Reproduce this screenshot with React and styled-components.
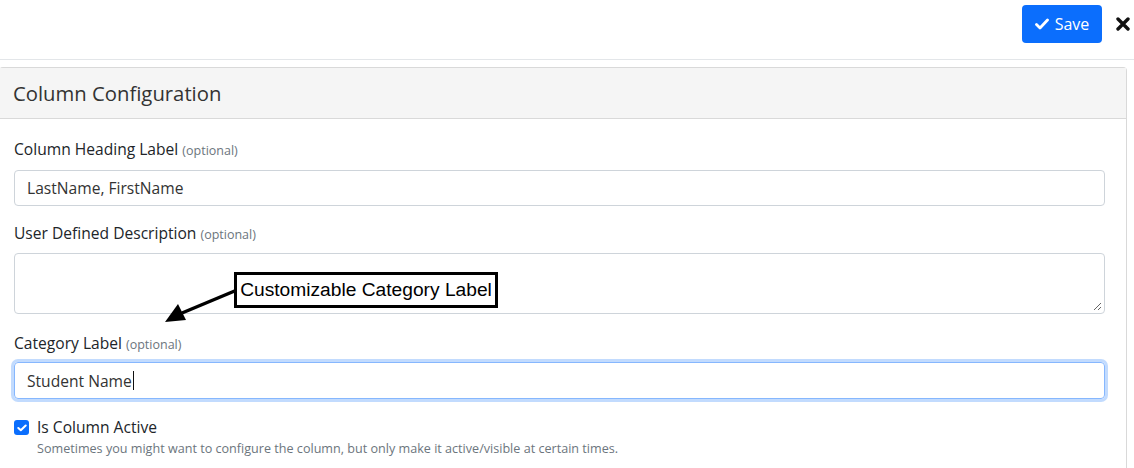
import { createGlobalStyle, styled } from "styled-components";

const GlobalStyle = createGlobalStyle`
    body{
        margin: 0;
        background: #fff;
        font-family: 'Open Sans', 'Liberation Sans', sans-serif;
        color: #212529;
        overflow: hidden;
    }
`

const Page = styled.div`
    position: relative;
    width: 1134px;
    height: 468px;
`

const TopBar = styled.div`
    height: 60px;
    border-bottom: 1px solid #e3e6e9;
    display: flex;
    align-items: center;
    justify-content: flex-end;
    padding-right: 4px;
    gap: 14px;
    box-sizing: border-box;
`

const SaveButton = styled.button`
    width: 80px;
    height: 38px;
    margin-top: -12px;
    background: #0b6efd;
    border: none;
    border-radius: 4px;
    color: #fff;
    font-family: 'Open Sans', sans-serif;
    font-size: 16px;
    display: flex;
    align-items: center;
    justify-content: center;
    gap: 6px;
    cursor: pointer;
    padding: 0;
`

const CloseButton = styled.span`
    margin-top: -12px;
    display: flex;
    align-items: center;
`

const Panel = styled.div`
    margin: 7px 0 0 -1px;
    width: 1128px;
    border: 1px solid #d9d9d9;
    border-radius: 4px 4px 0 0;
    border-bottom: none;
    height: 420px;
    box-sizing: border-box;
`

const PanelHeader = styled.div`
    height: 50px;
    background: #f5f5f5;
    border-bottom: 1px solid #d9d9d9;
    display: flex;
    align-items: center;
    padding-left: 13px;
    font-size: 20.3px;
    color: #333;
`

const PanelBody = styled.div`
    position: relative;
    padding: 19px 21px 0 14px;
`

const Field = styled.div`
    margin-bottom: ${p => p.space ?? 16}px;
`

const Label = styled.label`
    display: block;
    font-size: 15.6px;
    line-height: 22px;
    margin-bottom: ${p => p.gap || 8}px;
    color: #212529;
    small{
        font-size: 12.5px;
        color: #6c757d;
    }
`

const Input = styled.div`
    height: ${p => p.focus ? 37 : 36}px;
    box-sizing: border-box;
    border: 1px solid ${p => p.focus ? "#86b7fe" : "#ced4da"};
    border-radius: 4px;
    padding: 0 12px;
    display: flex;
    align-items: center;
    font-size: 15.6px;
    color: #333;
    box-shadow: ${p => p.focus ? "0 0 0 3px rgba(13,110,253,.25)" : "none"};
`

const Caret = styled.span`
    display: inline-block;
    width: 1px;
    height: 19px;
    background: #111;
    margin-left: 1px;
`

const TextArea = styled.div`
    position: relative;
    height: 61px;
    box-sizing: border-box;
    border: 1px solid #ced4da;
    border-radius: 4px;
`

const Grip = styled.svg`
    position: absolute;
    right: 2px;
    bottom: 2px;
`

const CheckRow = styled.div`
    display: flex;
    gap: 8px;
    margin-top: 17px;
`

const CheckBox = styled.span`
    width: 15px;
    height: 15px;
    margin-top: 4px;
    border-radius: 3px;
    background: #0b6efd;
    display: flex;
    align-items: center;
    justify-content: center;
    flex-shrink: 0;
`

const CheckText = styled.div`
    font-size: 15.6px;
    line-height: 22px;
    color: #212529;
    p{
        margin: 2px 0 0;
        font-size: 12.6px;
        line-height: 18px;
        color: #6c757d;
    }
`

const Callout = styled.div`
    position: absolute;
    left: 234px;
    top: 272px;
    width: 264px;
    height: 36px;
    box-sizing: border-box;
    border: 3px solid #000;
    background: #fff;
    font-family: 'Liberation Sans', Arial, sans-serif;
    font-size: 19.2px;
    display: flex;
    align-items: center;
    justify-content: center;
    color: #000;
`

const Arrow = styled.svg`
    position: absolute;
    left: 160px;
    top: 280px;
`

export default function App(){
    return (
        <Page>
            <GlobalStyle/>
            <TopBar>
                <SaveButton>
                    <svg width="14" height="12" viewBox="0 0 14 12">
                        <path d="M1.5 6.5 L5 10 L12.5 2" stroke="#fff" strokeWidth="2.8" fill="none" strokeLinecap="round" strokeLinejoin="round"/>
                    </svg>
                    Save
                </SaveButton>
                <CloseButton>
                    <svg width="14" height="14" viewBox="0 0 14 14">
                        <path d="M2 2 L12 12 M12 2 L2 12" stroke="#111" strokeWidth="3.4" strokeLinecap="round"/>
                    </svg>
                </CloseButton>
            </TopBar>
            <Panel>
                <PanelHeader>Column Configuration</PanelHeader>
                <PanelBody>
                    <Field>
                        <Label>Column Heading Label <small>(optional)</small></Label>
                        <Input>LastName, FirstName</Input>
                    </Field>
                    <Field space={18}>
                        <Label gap={7}>User Defined Description <small>(optional)</small></Label>
                        <TextArea>
                            <Grip width="9" height="9" viewBox="0 0 9 9">
                                <path d="M8 1 L1 8 M8 5 L5 8" stroke="#666" strokeWidth="1"/>
                            </Grip>
                        </TextArea>
                    </Field>
                    <Field space={0}>
                        <Label gap={6}>Category Label <small>(optional)</small></Label>
                        <Input focus>Student Name<Caret/></Input>
                    </Field>
                    <CheckRow>
                        <CheckBox>
                            <svg width="10" height="8" viewBox="0 0 10 8">
                                <path d="M1.3 4 L3.8 6.3 L8.7 1.5" stroke="#fff" strokeWidth="2" fill="none" strokeLinecap="round" strokeLinejoin="round"/>
                            </svg>
                        </CheckBox>
                        <CheckText>
                            Is Column Active
                            <p>Sometimes you might want to configure the column, but only make it active/visible at certain times.</p>
                        </CheckText>
                    </CheckRow>
                </PanelBody>
            </Panel>
            <Arrow width="80" height="50" viewBox="0 0 80 50">
                <path d="M77 10 L22 33" stroke="#000" strokeWidth="3.5"/>
                <path d="M5 42 L18 24 L26 40 Z" fill="#000"/>
            </Arrow>
            <Callout>Customizable Category Label</Callout>
        </Page>
    )
}
